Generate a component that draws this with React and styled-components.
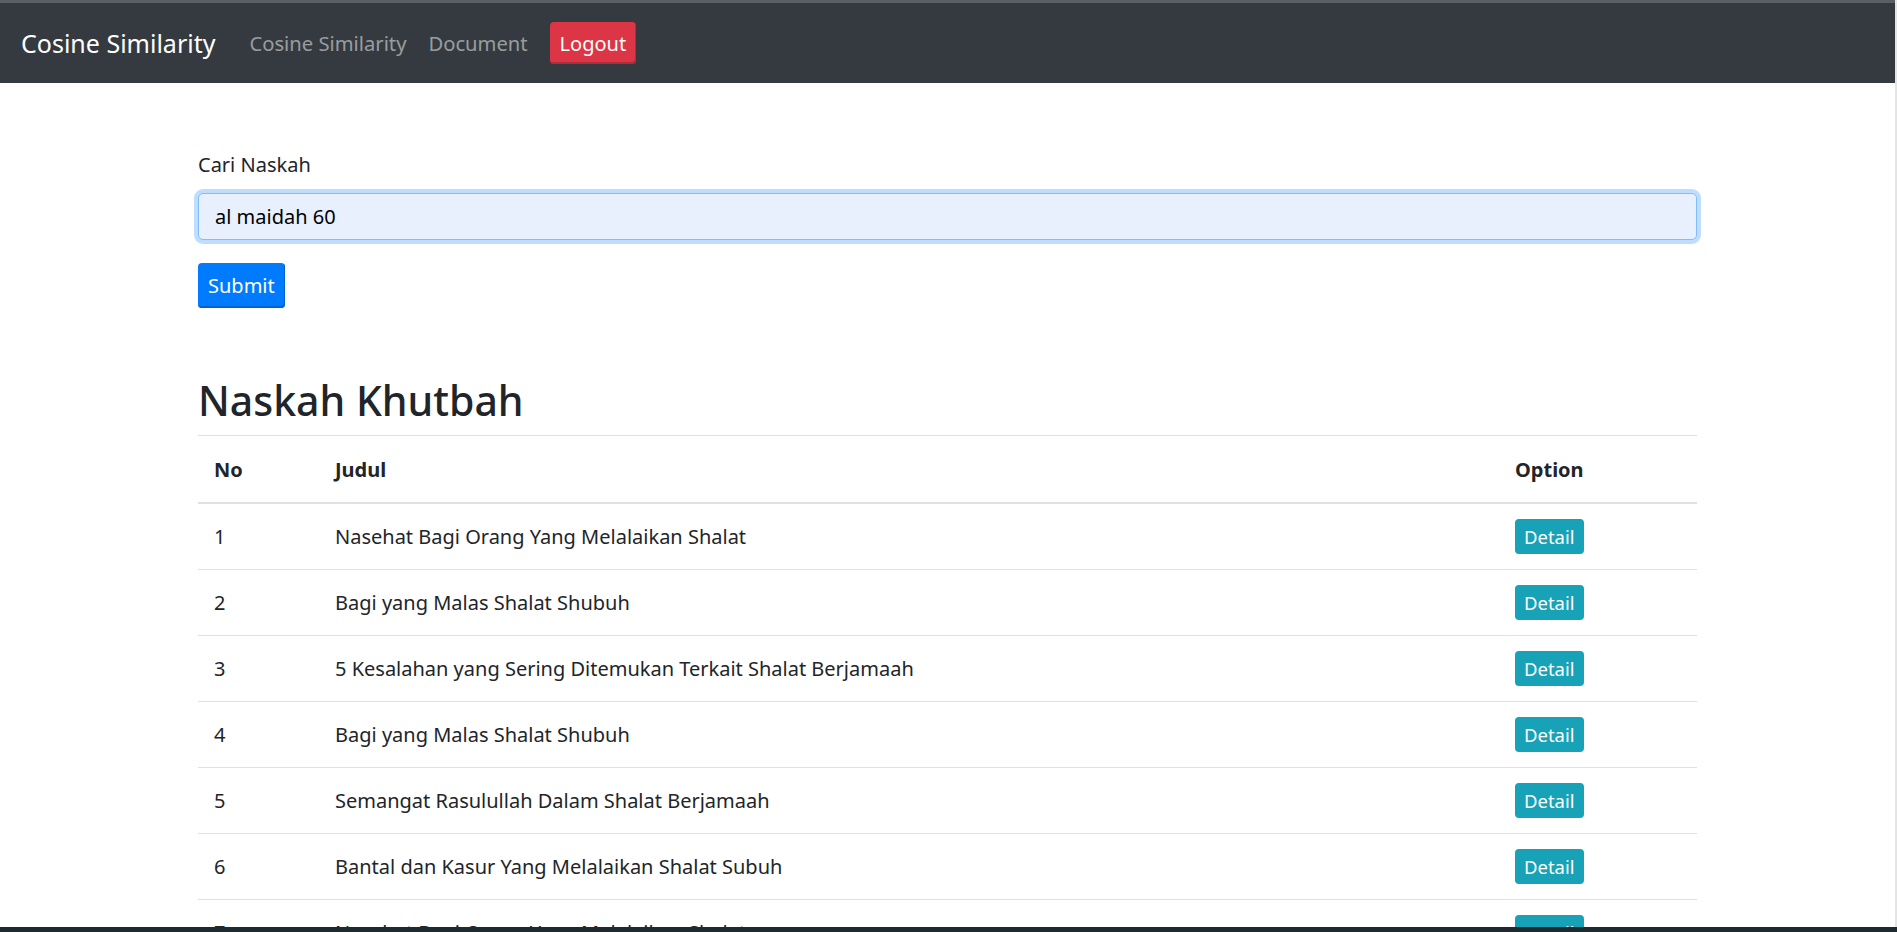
import React from 'react'
import styled, { createGlobalStyle } from 'styled-components'

const rows = [
  'Nasehat Bagi Orang Yang Melalaikan Shalat',
  'Bagi yang Malas Shalat Shubuh',
  '5 Kesalahan yang Sering Ditemukan Terkait Shalat Berjamaah',
  'Bagi yang Malas Shalat Shubuh',
  'Semangat Rasulullah Dalam Shalat Berjamaah',
  'Bantal dan Kasur Yang Melalaikan Shalat Subuh',
  'Nasehat Bagi Orang Yang Melalaikan Shalat',
  'Keutamaan Shalat Berjamaah di Masjid',
]

const App = () => {
  return (
    <Shell>
      <GlobalStyle />
      <Navbar>
        <Brand href="#">Cosine Similarity</Brand>
        <NavLink href="#">Cosine Similarity</NavLink>
        <NavLink href="#">Document</NavLink>
        <Button $variant="danger" $h={42}>Logout</Button>
      </Navbar>
      <Container>
        <FormGroup>
          <Label htmlFor="cari">Cari Naskah</Label>
          <Input id="cari" defaultValue="al maidah 60" readOnly />
        </FormGroup>
        <Button $variant="primary" $h={45}>Submit</Button>
        <Heading>Naskah Khutbah</Heading>
        <Table>
          <thead>
            <tr>
              <Th $w={89}>No</Th>
              <Th>Judul</Th>
              <Th $w={166}>Option</Th>
            </tr>
          </thead>
          <tbody>
            {rows.map((judul, i) => (
              <tr key={i}>
                <Td>{i + 1}</Td>
                <Td>{judul}</Td>
                <Td><DetailButton>Detail</DetailButton></Td>
              </tr>
            ))}
          </tbody>
        </Table>
      </Container>
      <Taskbar />
    </Shell>
  )
}

export default App

const GlobalStyle = createGlobalStyle`
    body {
        margin: 0;
        font-family: "Segoe UI", "Noto Sans", sans-serif;
        color: #212529;
        background: #fff;
    }
`

const Shell = styled.div`
    min-height: 100vh;
    border-right: 2px solid #e4e4e4;
`

const Navbar = styled.nav`
    display: flex;
    align-items: center;
    height: 80px;
    padding: 0 21px;
    border-top: 3px solid #5b5e62;
    background: #343a40;
`

const Brand = styled.a`
    font-size: 25px;
    color: #fff;
    text-decoration: none;
    margin-right: 23px;
`

const NavLink = styled.a`
    font-size: 20.2px;
    padding: 0 11px;
    color: rgba(255, 255, 255, 0.5);
    text-decoration: none;
`

const colors = {
    danger: ['#dc3545', '#b52a37'],
    primary: ['#007bff', '#0062cc'],
}

const Button = styled.button`
    display: inline-flex;
    align-items: center;
    justify-content: center;
    height: ${p => p.$h}px;
    padding: 0 10px;
    margin-left: ${p => p.$variant === 'danger' ? '11px' : '0'};
    font-family: inherit;
    font-size: 20px;
    color: #fff;
    background: ${p => colors[p.$variant][0]};
    border: none;
    border-radius: 4px;
    box-shadow: inset -1px -2px 0 ${p => colors[p.$variant][1]};
`

const Container = styled.main`
    width: 1499px;
    margin: 0 auto;
    padding-top: 67px;
`

const FormGroup = styled.div`
    margin-bottom: 23px;
`

const Label = styled.label`
    display: block;
    font-size: 20px;
    line-height: 1.5;
    margin-bottom: 13px;
`

const Input = styled.input`
    display: block;
    box-sizing: border-box;
    width: 100%;
    height: 47px;
    padding: 0 16px;
    font-family: inherit;
    font-size: 20px;
    color: #000;
    background: #e8f0fe;
    border: 1px solid #80bdff;
    border-radius: 5px;
    box-shadow: 0 0 0 4px rgba(0, 123, 255, 0.25);
    outline: none;
`

const Heading = styled.h2`
    font-size: 41px;
    font-weight: 500;
    line-height: 1.2;
    margin: 68px 0 10px;
`

const Table = styled.table`
    width: 100%;
    border-collapse: collapse;
    font-size: 20px;
`

const Th = styled.th`
    width: ${p => p.$w ? `${p.$w}px` : 'auto'};
    height: 66px;
    padding: 0 16px;
    text-align: left;
    font-weight: 700;
    border-top: 1px solid #dee2e6;
    border-bottom: 2px solid #dee2e6;
`

const Td = styled.td`
    height: 65px;
    padding: 0 16px;
    border-top: 1px solid #dee2e6;
`

const DetailButton = styled.button`
    height: 35px;
    padding: 0 9px;
    font-family: inherit;
    font-size: 18.5px;
    color: #fff;
    background: #17a2b8;
    border: none;
    border-radius: 4px;
`

const Taskbar = styled.div`
    position: fixed;
    left: 0;
    right: 0;
    bottom: 0;
    height: 5px;
    background: #1f2a30;
`
